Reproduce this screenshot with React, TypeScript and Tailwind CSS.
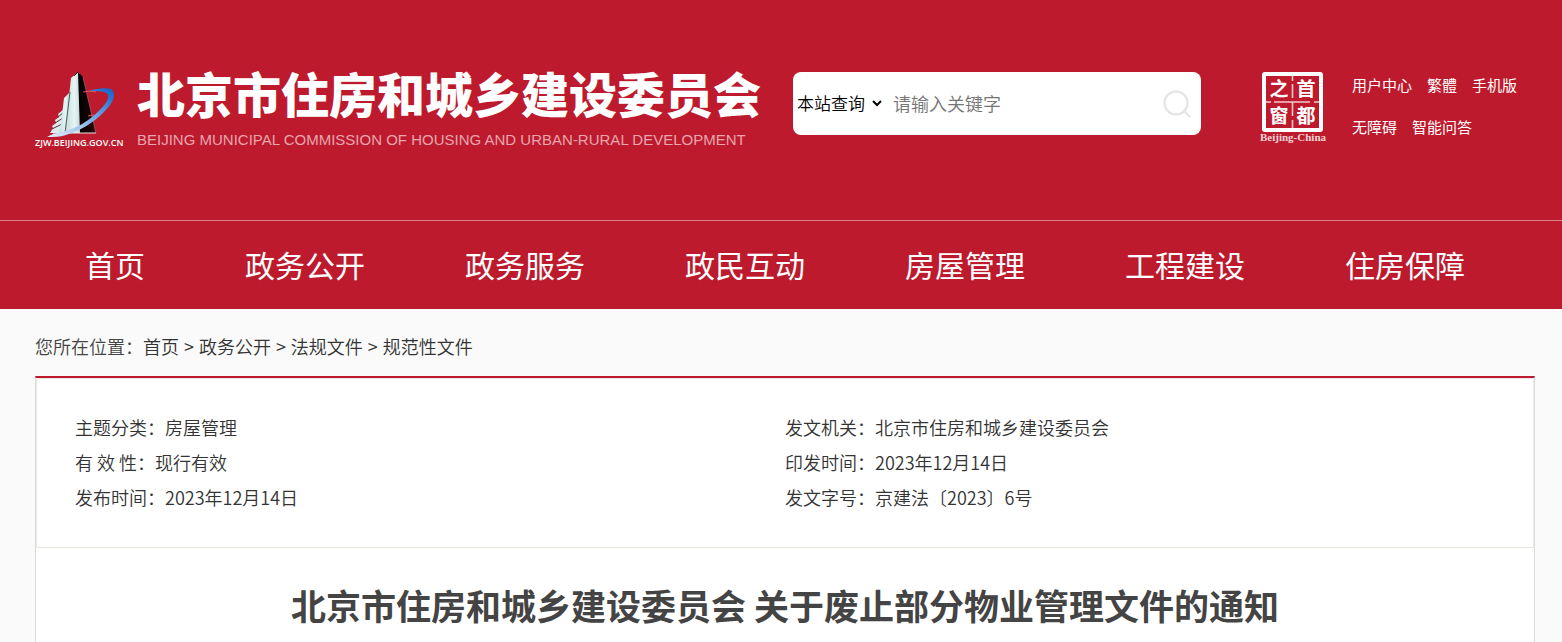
import React, { useState } from 'react';

const navItems = ['首页', '政务公开', '政务服务', '政民互动', '房屋管理', '工程建设', '住房保障'];

const userLinks = [
  ['用户中心', '繁體', '手机版'],
  ['无障碍', '智能问答']
];

const crumbs = ['首页', '政务公开', '法规文件', '规范性文件'];

const docInfo = [
  { label: '主题分类：', value: '房屋管理' },
  { label: '发文机关：', value: '北京市住房和城乡建设委员会' },
  { label: '有 效 性：', value: '现行有效' },
  { label: '印发时间：', value: '2023年12月14日' },
  { label: '发布时间：', value: '2023年12月14日' },
  { label: '发文字号：', value: '京建法〔2023〕6号' }
];

function BuildingLogo() {
  return (
    <svg viewBox="0 0 90 80" className="h-20 w-[90px] shrink-0" role="img" aria-label="ZJW.BEIJING.GOV.CN">
      <defs>
        <linearGradient id="tower" x1="0" y1="0" x2="1" y2="0">
          <stop offset="0" stopColor="#c3dcdd" />
          <stop offset="0.6" stopColor="#e6f5f4" />
          <stop offset="1" stopColor="#bcd3d4" />
        </linearGradient>
        <linearGradient id="side" x1="0" y1="0" x2="1" y2="0">
          <stop offset="0" stopColor="#000000" />
          <stop offset="0.6" stopColor="#160406" />
          <stop offset="1" stopColor="#3d0a12" />
        </linearGradient>
        <linearGradient id="orbit" x1="0" y1="1" x2="1" y2="0">
          <stop offset="0" stopColor="#e3f0fb" />
          <stop offset="0.35" stopColor="#a3c6ec" />
          <stop offset="0.65" stopColor="#5b9ae0" />
          <stop offset="1" stopColor="#0f5fc8" />
        </linearGradient>
      </defs>
      {/* low wings on the left */}
      <path d="M29 37l-6 5 1 3-4 3 1 3-4 3 1 2-3 5h16z" fill="#dcebeb" />
      <path d="M29 40l-6 5M28 46l-8 5M27 52l-10 5" stroke="#4f3337" strokeWidth="1" fill="none" />
      <path d="M29 26l6-6v41H24l2-10z" fill="url(#tower)" />
      <path d="M36 6l7-6 2 2 1 59H30l4-36z" fill="url(#tower)" />
      <path d="M35 20l-5 41" stroke="#46595b" strokeWidth="1" />
      <path d="M39 4l4-4" stroke="#222" strokeWidth="1" />
      <path d="M43 0l5 5 13 56H45z" fill="url(#side)" />
      <path d="M48 5l13 56" stroke="#9a6268" strokeWidth="0.800" />
      <path d="M18 61h43" stroke="#e6e6e6" strokeWidth="1" />
      {/* orbit ribbon */}
      <path
        d="M54 19c9-3 22-4 24 0 4 7-4 18-18 29-10 8-22 13-29 15-6 2-12 2-19 2 6-4 12-4 18-6 8-2 19-7 27-14 11-9 18-18 16-22-1-4-11-4-19-4z"
        fill="url(#orbit)"
      />
      <path d="M48 20c6-1 9-1 13 0M53 44l6-1" stroke="#e05a66" strokeWidth="1" fill="none" />
      <text x="0" y="74" fill="#fff" fontSize="9" fontWeight="600" fontFamily="Open Sans, sans-serif">
        ZJW.BEIJING.GOV.CN
      </text>
    </svg>
  );
}

function CapitalSeal() {
  return (
    <svg viewBox="0 0 70 72" className="h-[72px] w-[70px]" role="img" aria-label="首都之窗">
      <rect x="6" y="2" width="57" height="56" rx="1" fill="none" stroke="#fff" strokeWidth="4" />
      <path
        d="M34.500 4v5M34.500 12v14M34.500 30v14M34.500 48v8M8 30h5M16 30h14M38 30h14M56 30h5M30 30h8"
        stroke="#f3c9cd"
        strokeWidth="1.600"
      />
      <g fill="#fff" fontSize="19" fontWeight="700" fontFamily="Noto Sans CJK SC, sans-serif" textAnchor="middle">
        <text x="21" y="24">之</text>
        <text x="48" y="24">首</text>
        <text x="21" y="51">窗</text>
        <text x="48" y="51">都</text>
      </g>
      <text x="35" y="69" fill="#f6d5d8" fontSize="11" fontWeight="700" fontFamily="Liberation Serif, serif" textAnchor="middle">
        Beijing-China
      </text>
    </svg>
  );
}

function SearchBox() {
  const [keyword, setKeyword] = useState('');

  return (
    <form
      className="flex h-[63px] w-[408px] items-center rounded-lg bg-white pr-2 pb-0.5"
      onSubmit={(e) => e.preventDefault()}
    >
      <select aria-label="查询范围" className="h-10 w-[92px] shrink-0 text-[17px] text-black">
        <option>本站查询</option>
        <option>一网通查</option>
      </select>
      <input
        type="text"
        aria-label="关键字"
        placeholder="请输入关键字"
        value={keyword}
        onChange={(e) => setKeyword(e.target.value)}
        className="h-10 min-w-0 flex-1 px-2 text-lg text-black outline-none placeholder:text-[#757575]"
      />
      <button type="submit" aria-label="搜索" className="flex size-8 items-center justify-center">
        <svg viewBox="0 0 32 32" className="size-8" fill="none" stroke="#e6e6e6" strokeWidth="2.400" strokeLinecap="round">
          <circle cx="15" cy="16" r="11.500" />
          <path d="M23.500 24.500l5 5" />
        </svg>
      </button>
    </form>
  );
}

export default function App() {
  return (
    <div className="min-h-screen bg-[#fafafa] font-['Noto_Sans_CJK_SC',sans-serif] font-[350] text-[#333]">
      <header className="bg-[#bd1a2d] text-white">
        <div className="flex h-[220px] items-start pr-[27px] pl-[35px] pt-[72px]">
          <a href="#" className="flex shrink-0 items-start gap-3">
            <BuildingLogo />
            <div className="w-[624px]">
              <div className="text-[48px] leading-10 font-black whitespace-nowrap">北京市住房和城乡建设委员会</div>
              <div className="mt-[18px] font-['Liberation_Sans',sans-serif] text-[15px] leading-5 font-normal whitespace-nowrap text-[#e9a5ad]">
                BEIJING MUNICIPAL COMMISSION OF HOUSING AND URBAN-RURAL DEVELOPMENT
              </div>
            </div>
          </a>
          <div className="ml-8 shrink-0">
            <SearchBox />
          </div>
          <div className="ml-auto flex items-start gap-6 pr-[18px]">
            <CapitalSeal />
            <ul className="-mt-2 text-[15px] leading-[42px] font-normal">
              {userLinks.map((row, i) => (
                <li key={i} className="flex gap-[15px] whitespace-nowrap">
                  {row.map((text) => (
                    <a key={text} href="#">
                      {text}
                    </a>
                  ))}
                </li>
              ))}
            </ul>
          </div>
        </div>
        <nav className="border-t border-[#d9808a] pb-0.5 pl-[35px]">
          <ul className="flex text-[30px] leading-[86px] font-normal">
            {navItems.map((item) => (
              <li key={item}>
                <a href="#" className="block px-[50px] whitespace-nowrap">
                  {item}
                </a>
              </li>
            ))}
          </ul>
        </nav>
      </header>

      <main className="pr-[27px] pl-[35px]">
        <div className="flex pt-5 pb-3 text-lg leading-[35px]">
          <span className="text-[#444]">您所在位置：</span>
          <div className="flex gap-[5px]">
            {crumbs.map((crumb, i) => (
              <React.Fragment key={crumb}>
                {i > 0 && <span>&gt;</span>}
                <a href="#">{crumb}</a>
              </React.Fragment>
            ))}
          </div>
        </div>

        <article className="border-x border-t-2 border-x-[#dcdcdc] border-t-[#bd1a2d] bg-white">
          <dl className="grid grid-cols-2 border border-[#e9e9e1] px-[38px] pt-[31px] pb-8 text-lg leading-[35px]">
            {docInfo.map((item) => (
              <div key={item.label} className="flex">
                <dt className="whitespace-pre">{item.label}</dt>
                <dd>{item.value}</dd>
              </div>
            ))}
          </dl>
          <h1 className="py-8 text-center text-[35px] leading-[50px] font-bold text-[#444]">
            北京市住房和城乡建设委员会 关于废止部分物业管理文件的通知
          </h1>
        </article>
      </main>
    </div>
  );
}
